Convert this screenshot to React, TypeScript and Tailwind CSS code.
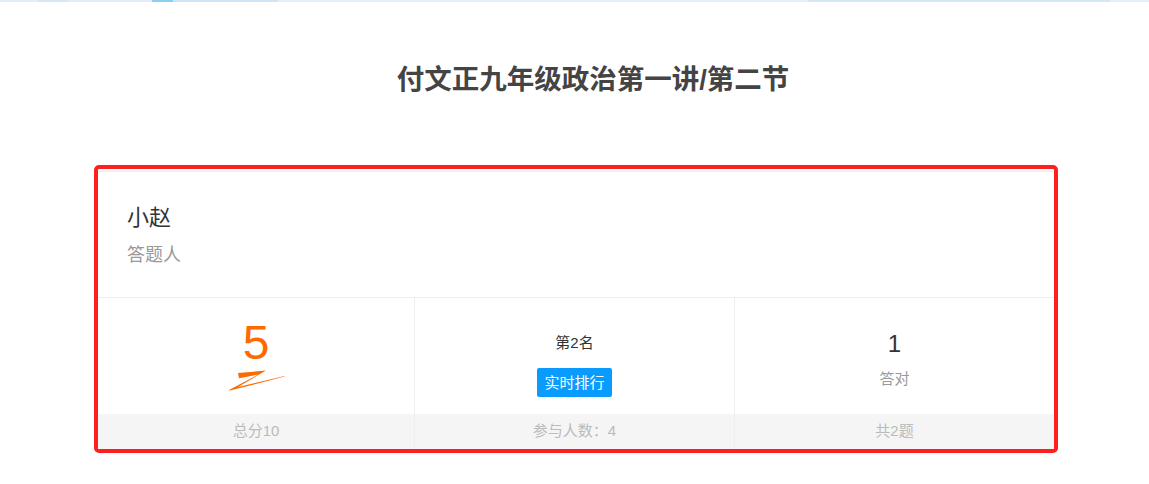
import React from 'react';

const font = { fontFamily: '"Liberation Sans", "Noto Sans CJK SC", sans-serif' };

function ScoreMark() {
  // 手写的“Z”形分数下划线
  return (
    <svg width="57" height="21" viewBox="0 0 57 21" className="block">
      <path
        d="M10,3 L38,0.5 L10,17 L56.5,6 L56.5,6.6 L2,20.6 L0.5,20.2 L30,4.6 L11,8.2 Z"
        fill="#ff6a00"
      />
    </svg>
  );
}

export default function App() {
  return (
    <div className="w-[1149px] h-[484px] bg-white overflow-hidden" style={font}>
      {/* 顶部进度条 */}
      <div className="flex h-[2px] w-full">
        <div className="w-[38px] bg-[#e4edf4]" />
        <div className="w-[30px] bg-[#d6e8f5]" />
        <div className="w-[84px] bg-[#e4edf4]" />
        <div className="w-[21px] bg-[#8ecdf4]" />
        <div className="w-[105px] bg-[#cfe5f5]" />
        <div className="w-[530px] bg-[#e6eff6]" />
        <div className="w-[302px] bg-[#d3e7f4]" />
        <div className="flex-1 bg-[#e6eff6]" />
      </div>

      <div className="pl-[37px] pt-[60px] flex justify-center">
        <h1 className="text-[27.5px] leading-[36px] font-bold text-[#444]">付文正九年级政治第一讲/第二节</h1>
      </div>

      <div className="ml-[94px] mt-[67px] w-[964px] border-4 border-[#ff1f1f] rounded-[5px] pt-[2px]">
        <div className="border-t border-[#eee] bg-white">
          <div className="pl-[29px] pt-[31px] pb-[29px] border-b border-[#eee]">
            <div className="text-[22px] leading-[30px] text-[#333]">小赵</div>
            <div className="mt-[9px] text-[18px] leading-[26px] text-[#999]">答题人</div>
          </div>

          <div className="grid grid-cols-[316px_320px_1fr]">
            <div className="flex flex-col">
              <div className="h-[116px] flex flex-col items-center pt-[21px]">
                <div className="text-[48px] leading-[48px] text-[#ff6a00]">5</div>
                <div className="mt-[3px]">
                  <ScoreMark />
                </div>
              </div>
              <div className="h-[35px] bg-[#f5f5f5] flex items-center justify-center text-[15px] text-[#bbb]">总分10</div>
            </div>

            <div className="flex flex-col border-l border-[#eee]">
              <div className="h-[116px] flex flex-col items-center pt-[35px]">
                <div className="text-[15px] leading-[20px] text-[#333]">第2名</div>
                <button className="mt-[15px] h-[29px] px-[7px] bg-[#0a9bff] text-white text-[15px] leading-[29px] rounded-[2px]">
                  实时排行
                </button>
              </div>
              <div className="h-[35px] bg-[#f5f5f5] flex items-center justify-center text-[15px] text-[#bbb]">参与人数：4</div>
            </div>

            <div className="flex flex-col border-l border-[#eee]">
              <div className="h-[116px] flex flex-col items-center pt-[30px]">
                <div className="text-[24px] leading-[32px] text-[#333]">1</div>
                <div className="mt-[9px] text-[15px] leading-[20px] text-[#999]">答对</div>
              </div>
              <div className="h-[35px] bg-[#f5f5f5] flex items-center justify-center text-[15px] text-[#bbb]">共2题</div>
            </div>
          </div>
        </div>
      </div>
    </div>
  );
}
